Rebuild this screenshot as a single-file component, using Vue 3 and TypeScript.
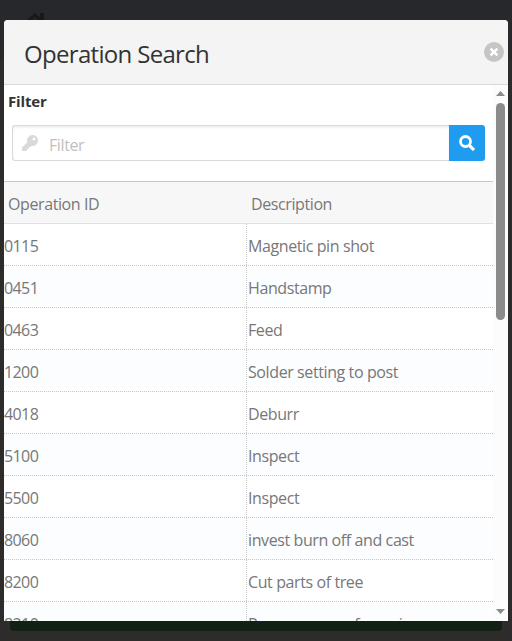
<script setup lang="ts">
interface Operation {
  id: string
  description: string
}

const operations: Operation[] = [
  { id: '0115', description: 'Magnetic pin shot' },
  { id: '0451', description: 'Handstamp' },
  { id: '0463', description: 'Feed' },
  { id: '1200', description: 'Solder setting to post' },
  { id: '4018', description: 'Deburr' },
  { id: '5100', description: 'Inspect' },
  { id: '5500', description: 'Inspect' },
  { id: '8060', description: 'invest burn off and cast' },
  { id: '8200', description: 'Cut parts of tree' },
  { id: '8210', description: 'Remove sprue from ring' },
]
</script>

<template>
  <div class="page">
    <div class="panel-shade"></div>
    <svg class="home" viewBox="0 0 24 22"><path d="M12 0 0 11l2 2L12 4l10 9 2-2-3-3V0h-4v4.500z M4 13l8-7 8 7v9H4z" /></svg>
    <div class="footer-button"></div>
    <section class="modal">
      <header class="title-bar">
        <h1>Operation Search</h1>
        <button class="close" aria-label="Close">
          <svg viewBox="0 0 20 20"><circle cx="10" cy="10" r="10" fill="#c5c5c5" /><path d="M6.600 6.600l6.800 6.800M13.400 6.600l-6.800 6.800" stroke="#fff" stroke-width="2.500" /></svg>
        </button>
      </header>
      <div class="body">
        <div class="content">
          <label class="filter-label">Filter</label>
          <div class="filter">
            <div class="field">
              <svg class="key" viewBox="0 0 512 512"><path fill="#d9d9d9" d="M512 176c0 97-79 176-176 176-11 0-22-1-33-3l-24 27a24 24 0 0 1-18 8h-37v40a24 24 0 0 1-24 24h-40v40a24 24 0 0 1-24 24H24a24 24 0 0 1-24-24v-78c0-6 3-12 7-17l162-162A176 176 0 0 1 336 0c97 0 176 79 176 176zM336 128a48 48 0 1 0 96 0 48 48 0 1 0-96 0z" /></svg>
              <span>Filter</span>
            </div>
            <button class="search" aria-label="Search">
              <svg viewBox="0 0 16 16"><circle cx="6.500" cy="6.500" r="5" fill="none" stroke="#fff" stroke-width="2.800" /><path d="M10.300 10.300l4.700 4.700" stroke="#fff" stroke-width="3.200" /></svg>
            </button>
          </div>
          <div class="table">
            <div class="row head"><span>Operation ID</span><span>Description</span></div>
            <div v-for="op in operations" :key="op.id" class="row">
              <span class="id">{{ op.id }}</span><span class="desc">{{ op.description }}</span>
            </div>
          </div>
        </div>
        <div class="scrollbar">
          <svg viewBox="0 0 9 5"><path d="M4.500 0 9 5H0z" /></svg>
          <div class="thumb"></div>
          <svg viewBox="0 0 9 5"><path d="M0 0h9L4.500 5z" /></svg>
        </div>
      </div>
    </section>
  </div>
</template>

<style>
body {
  margin: 0;
}
</style>

<style scoped>
.page {
  position: relative;
  box-sizing: border-box;
  width: 512px;
  height: 641px;
  padding: 20px 4px;
  overflow: hidden;
  background: #27282c;
  color: #777;
  font: 16px/20px "Open Sans", "Noto Sans", sans-serif;
  letter-spacing: -0.400px;
}
.panel-shade {
  position: absolute;
  inset: 55px 0 0;
  border-radius: 8px 8px 0 0;
  background: #2d2c2b;
}
.home {
  position: absolute;
  left: 23px;
  top: 13px;
  width: 24px;
  height: 22px;
  fill: #17181a;
}
.footer-button {
  position: absolute;
  left: 10px;
  top: 600px;
  width: 492px;
  height: 31px;
  border-radius: 4px;
  background: #112114;
}
.modal {
  position: relative;
  height: 601px;
  display: flex;
  flex-direction: column;
  overflow: hidden;
  border-radius: 4px 4px 0 0;
  background: #fff;
}
.title-bar {
  box-sizing: border-box;
  flex: none;
  height: 65px;
  padding: 0 4px 0 20px;
  display: flex;
  align-items: center;
  justify-content: space-between;
  background: #f4f4f4;
  border-bottom: 1px solid #d9d9d9;
}
h1 {
  margin: 3px 0 0;
  color: #333;
  font-size: 24px;
  font-weight: 370;
  line-height: 32px;
  letter-spacing: -0.680px;
}
button {
  padding: 0;
  border: 0;
}
.close {
  width: 20px;
  height: 20px;
  background: none;
}
.close svg {
  display: block;
}
.body {
  flex: 1;
  min-height: 0;
  display: flex;
}
.content {
  width: 489px;
  overflow: hidden;
}
.filter-label {
  display: block;
  padding: 6px 4px 1px;
  color: #333;
  font-size: 15px;
  font-weight: 700;
  letter-spacing: -0.150px;
}
.filter {
  display: flex;
  height: 36px;
  margin: 13px 8px 20px;
}
.field {
  box-sizing: border-box;
  flex: 1;
  display: flex;
  align-items: center;
  gap: 11px;
  padding: 3px 0 0 9px;
  border: 1px solid #d9d9d9;
  border-right: 0;
  border-radius: 3px 0 0 3px;
  box-shadow: inset 0 2px 2px #f0f0f0;
  color: #bfbfbf;
}
.key {
  width: 16px;
  height: 16px;
  margin-top: -4px;
}
.search {
  width: 36px;
  display: grid;
  place-items: center;
  border-radius: 0 3px 3px 0;
  background: #1f9cf0;
}
.search svg {
  width: 16px;
  height: 16px;
}
.table {
  border-top: 1px solid #c8c8c8;
}
.row {
  box-sizing: border-box;
  height: 42px;
  display: grid;
  grid-template-columns: 243px 1fr;
  grid-template-rows: 41px;
  line-height: 44px;
  white-space: nowrap;
  border-bottom: 1px dotted #c6c6c6;
}
.row:nth-child(odd) {
  background: #fbfdff;
}
.row.head {
  background: #f7f7f7;
  border-bottom: 1px solid #e0e0e0;
}
.head span {
  padding-left: 4px;
}
.id {
  border-right: 1px dotted #c6c6c6;
  box-sizing: border-box;
  letter-spacing: -0.600px;
}
.desc {
  padding-left: 1px;
}
.scrollbar {
  flex: 1;
  display: flex;
  flex-direction: column;
  align-items: center;
  padding: 6px 0 7px;
  background: #fcfcfc;
}
.scrollbar svg {
  width: 9px;
  height: 5px;
  fill: #8b8b8b;
}
.thumb {
  width: 9px;
  height: 217px;
  margin: 7px 0 auto;
  border-radius: 5px;
  background: #8b8b8b;
}
</style>
